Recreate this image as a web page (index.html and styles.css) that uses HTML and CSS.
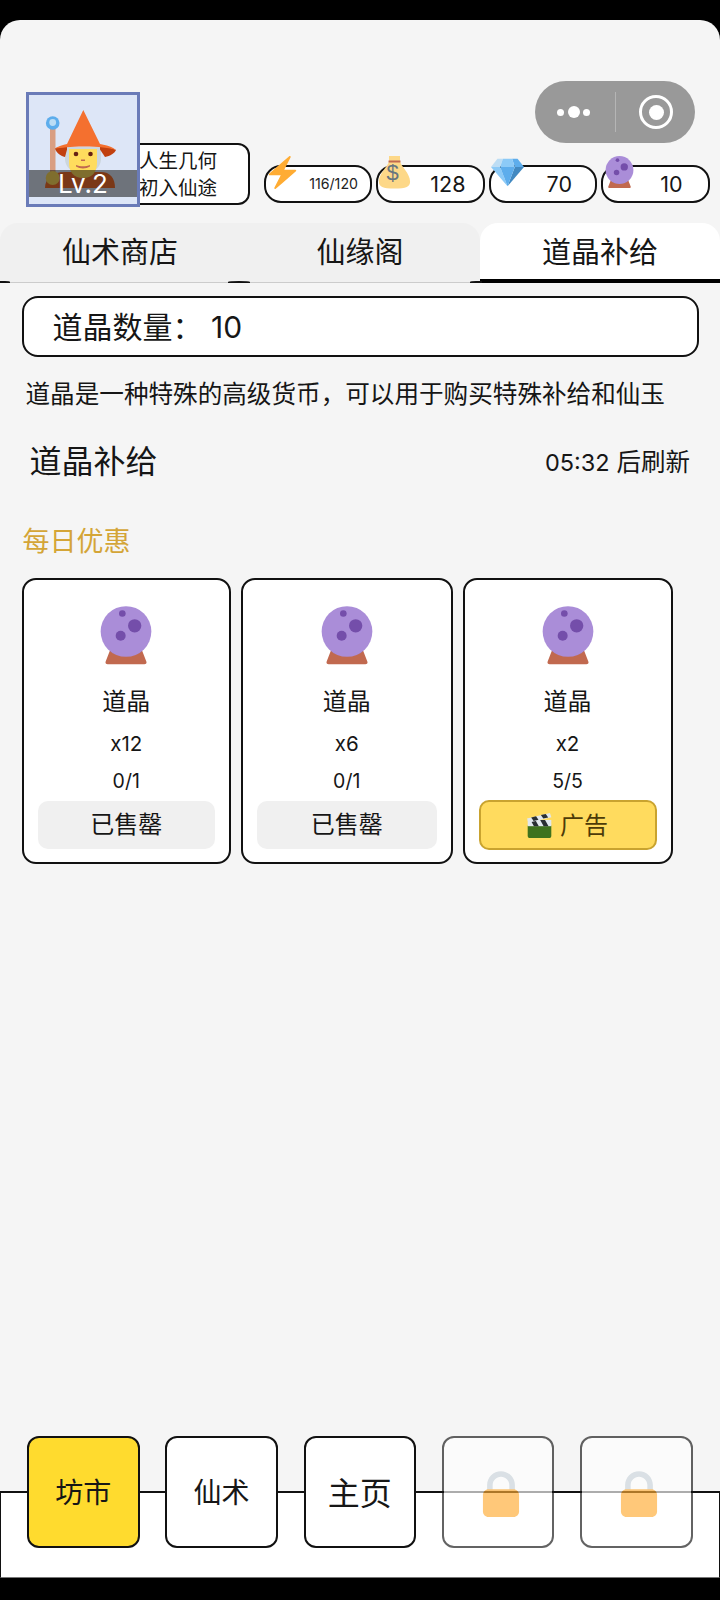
FILE: index.html
```html
<!DOCTYPE html>
<html lang="zh">
<head>
<meta charset="utf-8">
<title>道晶补给</title>
<link rel="stylesheet" href="styles.css">
</head>
<body>
<svg class="defs" width="0" height="0" aria-hidden="true">
  <symbol id="orb" viewBox="0 0 36 36">
    <path fill="#C1694F" d="M7 35c-1 0-1.600-.9-1.200-1.700L9 25h18l3.200 8.300c.4.8-.2 1.700-1.200 1.700z"/>
    <path fill="#8A4B38" d="M9.500 25h17l.9 2.300c-2.400 1.700-5.600 2.500-9.400 2.500s-7-.8-9.400-2.500z"/>
    <circle cx="18" cy="15.300" r="15.200" fill="#AA8DD8"/>
    <circle cx="23.200" cy="11.900" r="4" fill="#744EAA"/>
    <circle cx="14.800" cy="17.900" r="3" fill="#744EAA"/>
    <circle cx="15.800" cy="4.500" r="2" fill="#744EAA"/>
  </symbol>
  <symbol id="lock" viewBox="0 0 36 36">
    <path fill="#CCD6DD" d="M18 3C12.477 3 8 7.477 8 13v10h4V13c0-3.313 2.687-6 6-6s6 2.687 6 6v10h4V13c0-5.523-4.477-10-10-10z"/>
    <path fill="#FFAC33" d="M31 32c0 2.209-1.791 4-4 4H9c-2.209 0-4-1.791-4-4V20c0-2.209 1.791-4 4-4h18c2.209 0 4 1.791 4 4v12z"/>
  </symbol>
</svg>
<div class="app">
  <div class="capsule">
    <div class="capsule-dots"><i class="dot"></i><i class="dot dot-big"></i><i class="dot"></i></div>
    <div class="capsule-sep"></div>
    <div class="capsule-target"><i class="target-core"></i></div>
  </div>
  <header class="header">
    <div class="avatar">
      <svg class="avatar-art" viewBox="0 0 108 108">
        <path fill="#F4702F" d="M16 93c0-10 8-16 20-16h36c9 0 14 6 14 16z"/>
        <rect x="21" y="32" width="5.500" height="52" fill="#D99E82"/>
        <circle cx="23.700" cy="28" r="6.800" fill="#5DADEC"/>
        <circle cx="23.700" cy="27.500" r="3.400" fill="#BBDDF5"/>
        <circle cx="23.700" cy="83" r="7" fill="#FFDC5D"/>
        <path fill="#CCD6DD" d="M36 52h36v12c0 5-3 9-5 10H41c-2-1-5-5-5-10z"/>
        <path fill="#FFDC5D" d="M40 54h28v14c0 9-5 15-14 15s-14-6-14-15z"/>
        <circle cx="47" cy="59" r="2.300" fill="#662113"/>
        <circle cx="61.500" cy="59" r="2.300" fill="#662113"/>
        <path fill="#C1694F" d="M52 64.500h4v1.500h-4z"/>
        <path fill="#C1694F" d="M47 70c4 1.800 10 1.800 14 0v1.500c-4 2.500-10 2.500-14 0z"/>
        <path fill="#C1400F" d="M26 53.500c4-2 10-3 12-3v4l-2 7.500c-5-1-9-5-10-8.500z"/>
        <path fill="#C1400F" d="M87 55c-4-2-12-3.500-16-3.500v3l5 7.500c5-1 10-4 11-7z"/>
        <path fill="#F4702F" d="M54.300 15 71 49c6 1 13 3 16 6-6-2-18-3.500-32-3.500S32 53 26 53.500c3-2 8-4 12-4.500z"/>
      </svg>
      <div class="level">Lv.2</div>
    </div>
    <div class="name-box">
      <div>人生几何</div>
      <div>初入仙途</div>
    </div>
    <div class="resources">
      <div class="pill">
        <svg class="pill-icon" viewBox="0 0 36 36"><path fill="#FFAC33" d="M32.938 15.651C32.792 15.26 32.418 15 32 15H19.925L26.89 1.458c.219-.426.106-.947-.271-1.243C26.437.071 26.218 0 26 0c-.233 0-.466.082-.653.243L18 6.588 3.347 19.243c-.316.273-.43.714-.284 1.105S3.582 21 4 21h12.075L9.11 34.542c-.219.426-.106.947.271 1.243.182.144.401.215.619.215.233 0 .466-.082.653-.243L18 29.412l14.653-12.655c.317-.273.43-.714.285-1.106z"/></svg>
        <span class="pill-small">116/120</span>
      </div>
      <div class="pill">
        <svg class="pill-icon" viewBox="0 0 36 36">
          <path fill="#FDD888" d="M12 0h12v6c1 5 11 13 11 22 0 5-4 7.500-17 7.500S1 33 1 28C1 19 11 11 12 6z"/>
          <path fill="#C1694F" d="M11.500 5h13v2h-13z"/>
          <text class="bag-sign" x="16" y="26.500" text-anchor="middle">$</text>
        </svg>
        <span class="pill-value">128</span>
      </div>
      <div class="pill">
        <svg class="pill-icon" viewBox="0 0 36 36">
          <path fill="#BDDDF4" d="M13 3H7l-7 9h10z"/>
          <path fill="#5DADEC" d="M36 12l-7-9h-6l3 9z"/>
          <path fill="#4289C1" d="M26 12h10L18 33z"/>
          <path fill="#8CCAF7" d="M10 12H0l18 21zm3-9l-3 9h16l-3-9z"/>
          <path fill="#5DADEC" d="M18 33l-8-21h16z"/>
        </svg>
        <span class="pill-value pill-value-70">70</span>
      </div>
      <div class="pill">
        <svg class="pill-icon"><use href="#orb"/></svg>
        <span class="pill-value pill-value-10">10</span>
      </div>
    </div>
  </header>

  <nav class="tabs">
    <div class="tab tab-first">仙术商店</div>
    <div class="tab tab-second">仙缘阁</div>
    <div class="tab tab-active">道晶补给</div>
    <i class="tab-nub nub-a"></i>
    <i class="tab-nub nub-b"></i>
    <i class="tab-nub nub-c"></i>
  </nav>

  <main class="content">
    <div class="count-box">道晶数量： 10</div>
    <p class="desc">道晶是一种特殊的高级货币，可以用于购买特殊补给和仙玉</p>
    <div class="section-head">
      <h2 class="section-title">道晶补给</h2>
      <div class="refresh"><span class="refresh-time">05:32</span> 后刷新</div>
    </div>
    <div class="daily">每日优惠</div>
    <div class="cards">
      <div class="card">
        <svg class="card-icon"><use href="#orb"/></svg>
        <div class="card-name">道晶</div>
        <div class="card-qty">x12</div>
        <div class="card-limit">0/1</div>
        <div class="card-btn">已售罄</div>
      </div>
      <div class="card">
        <svg class="card-icon"><use href="#orb"/></svg>
        <div class="card-name">道晶</div>
        <div class="card-qty">x6</div>
        <div class="card-limit">0/1</div>
        <div class="card-btn">已售罄</div>
      </div>
      <div class="card">
        <svg class="card-icon"><use href="#orb"/></svg>
        <div class="card-name">道晶</div>
        <div class="card-qty">x2</div>
        <div class="card-limit">5/5</div>
        <div class="card-btn card-btn-ad">
          <svg class="clapper" viewBox="0 0 36 36">
            <path fill="#3E721D" d="M1 18h34v15c0 1.700-1.300 3-3 3H4c-1.700 0-3-1.300-3-3z"/>
            <path fill="#E1E8ED" d="M1 10h34v9H1z"/>
            <path fill="#292F33" d="M5 10h7l5 9h-7zm14 0h7l5 9h-7z"/>
            <path fill="#E1E8ED" d="M0 8 33 0l2 6L2 14z"/>
            <path fill="#292F33" d="M6 6.500l7-1.700 3.500 5-7 1.700zm14-3.500 7-1.700 3.500 5-7 1.700z"/>
          </svg>
          <span>广告</span>
        </div>
      </div>
    </div>
  </main>

  <footer class="footer">
    <div class="nav-row">
      <div class="nav-btn nav-btn-on">坊市</div>
      <div class="nav-btn">仙术</div>
      <div class="nav-btn nav-btn-home">主页</div>
      <div class="nav-btn nav-btn-locked"><svg class="lock-icon"><use href="#lock"/></svg></div>
      <div class="nav-btn nav-btn-locked"><svg class="lock-icon"><use href="#lock"/></svg></div>
    </div>
  </footer>
</div>
</body>
</html>
```

FILE: styles.css
```css
* { box-sizing: border-box; }
html, body { margin: 0; padding: 0; }
body {
  width: 720px;
  height: 1600px;
  background: #000;
  padding: 20px 0 22px;
  overflow: hidden;
  font-family: Inter, "Noto Sans CJK SC", sans-serif;
  color: #161616;
}
.defs { position: absolute; }
.app {
  position: relative;
  height: 1558px;
  background: #f5f5f5;
  border-radius: 20px 20px 0 0;
  display: flex;
  flex-direction: column;
  overflow: hidden;
}
.capsule {
  position: absolute;
  left: 535px;
  top: 61px;
  width: 160px;
  height: 62px;
  border-radius: 31px;
  background: #999;
  display: flex;
  align-items: center;
}
.capsule-dots {
  width: 80px;
  display: flex;
  align-items: center;
  justify-content: center;
  gap: 3.500px;
  padding-right: 3px;
}
.dot { width: 7px; height: 7px; border-radius: 50%; background: #fff; }
.dot-big { width: 12px; height: 12px; }
.capsule-sep { width: 1px; height: 40px; background: #b5b5b5; }
.capsule-target {
  width: 34px;
  height: 34px;
  margin-left: 23px;
  border: 3px solid #fff;
  border-radius: 50%;
  display: flex;
  align-items: center;
  justify-content: center;
}
.target-core { width: 15px; height: 15px; border-radius: 50%; background: #fff; }

.header {
  display: flex;
  align-items: flex-end;
  height: 187px;
  padding: 0 0 0 26px;
}
.avatar {
  position: relative;
  width: 114px;
  height: 115px;
  border: 3px solid #6a7bb8;
  background: #dde6f7;
  z-index: 1;
}
.avatar-art { display: block; width: 108px; height: 108px; }
.level {
  position: absolute;
  left: 0;
  right: 0;
  top: 75px;
  height: 27px;
  background: rgba(0, 0, 0, .5);
  color: #fff;
  font-size: 26px;
  line-height: 27px;
  text-align: center;
}
.name-box {
  width: 113px;
  height: 62px;
  margin: 0 0 2px -3px;
  padding: 3px 0 0 0;
  background: #fff;
  border: 2px solid #111;
  border-radius: 0 12px 12px 0;
  font-size: 19.500px;
  line-height: 27px;
  white-space: nowrap;
}
.resources {
  display: flex;
  gap: 4px;
  margin: 0 0 4px 13.500px;
}
.pill {
  position: relative;
  width: 108.500px;
  height: 38.500px;
  background: #fff;
  border: 2px solid #111;
  border-radius: 17px;
  display: flex;
  align-items: center;
  justify-content: flex-end;
}
.pill-icon {
  position: absolute;
  left: 0;
  top: -11px;
  width: 33px;
  height: 33px;
}
.pill-small { font-size: 14.200px; margin-right: 12px; color: #222; }
.pill-value { font-size: 21.500px; margin-right: 17px; }
.pill-value-70 { margin-right: 23px; }
.pill-value-10 { margin-right: 25px; }
.bag-sign { font-family: "Liberation Sans", sans-serif; font-size: 24px; fill: #67757F; }

.tabs {
  position: relative;
  display: flex;
  height: 60px;
  margin-top: 16px;
  border-bottom: 1px solid #ccc;
}
.tab {
  position: relative;
  z-index: 1;
  width: 240px;
  height: 59px;
  background: #f0f0f0;
  border-radius: 18px 18px 0 0;
  font-size: 29px;
  line-height: 60px;
  text-align: center;
}
.tab-first { border-top-right-radius: 0; }
.tab-second { border-top-left-radius: 0; }
.tab-active {
  background: #fff;
  border-bottom: 4px solid #000;
  height: 60px;
}
.tab-nub {
  position: absolute;
  bottom: -1px;
  height: 2px;
  background: #111;
  border-radius: 50% 50% 0 0;
  z-index: 2;
}
.nub-a { left: 0; width: 10px; border-top-left-radius: 0; }
.nub-b { left: 228px; width: 22px; }
.nub-c { left: 470px; width: 12px; border-top-right-radius: 0; }

.content {
  flex: 1;
  padding: 13px 0 0 21.500px;
}
.count-box {
  width: 677.500px;
  height: 61px;
  padding-left: 29px;
  background: #fff;
  border: 2px solid #111;
  border-radius: 16px;
  font-size: 30px;
  line-height: 58px;
}
.desc {
  margin: 19px 0 0 4px;
  font-size: 24.600px;
  line-height: 36px;
  white-space: nowrap;
}
.section-head {
  display: flex;
  align-items: center;
  justify-content: space-between;
  margin: 26px 30px 0 8px;
  height: 48px;
}
.section-title {
  margin: 0;
  font-size: 32px;
  font-weight: 400;
  line-height: 48px;
}
.refresh { font-size: 24.500px; line-height: 48px; }
.refresh-time { font-size: 23.500px; }
.daily {
  margin: 36px 0 0 1px;
  font-size: 27px;
  line-height: 40px;
  color: #d4a537;
}
.cards {
  display: grid;
  grid-template-columns: 209.500px 211.500px 210px;
  gap: 10px;
  margin-top: 16px;
}
.card {
  height: 286px;
  padding: 26px 14px 0;
  background: #fff;
  border: 2px solid #111;
  border-radius: 14px;
  display: flex;
  flex-direction: column;
  align-items: center;
}
.card-icon { width: 60px; height: 60px; flex: none; }
.card-name { margin-top: 18px; font-size: 24px; line-height: 36px; }
.card-qty { margin-top: 6px; font-size: 20.500px; line-height: 36px; }
.card-limit { margin-top: 1px; font-size: 19.500px; line-height: 36px; }
.card-btn {
  align-self: stretch;
  margin-top: 2px;
  height: 48px;
  background: #f0f0f0;
  border-radius: 10px;
  font-size: 24px;
  line-height: 47px;
  text-align: center;
}
.card-btn-ad {
  background: #ffdb5e;
  border: 2px solid #c9a32f;
  color: #4d3b08;
  display: flex;
  align-items: center;
  justify-content: center;
  gap: 8px;
  margin-top: 1px;
  height: 50px;
}
.clapper { width: 25px; height: 25px; }

.footer {
  height: 87px;
  background: #fff;
  border: 1px solid #111;
  border-top-width: 2px;
  border-bottom-color: #777;
}
.nav-row {
  display: flex;
  gap: 25.800px;
  margin: -57px 0 0 26px;
}
.nav-btn {
  width: 112.500px;
  height: 112px;
  background: #fff;
  border: 2px solid #111;
  border-radius: 12px;
  display: flex;
  align-items: center;
  justify-content: center;
  font-size: 28px;
  padding-bottom: 3px;
}
.nav-btn-on { background: #ffdb2e; }
.nav-btn-home { font-size: 32px; }
.nav-btn-locked { opacity: .65; padding-bottom: 0; }
.lock-icon { width: 50px; height: 50px; margin-left: 6px; }
```
